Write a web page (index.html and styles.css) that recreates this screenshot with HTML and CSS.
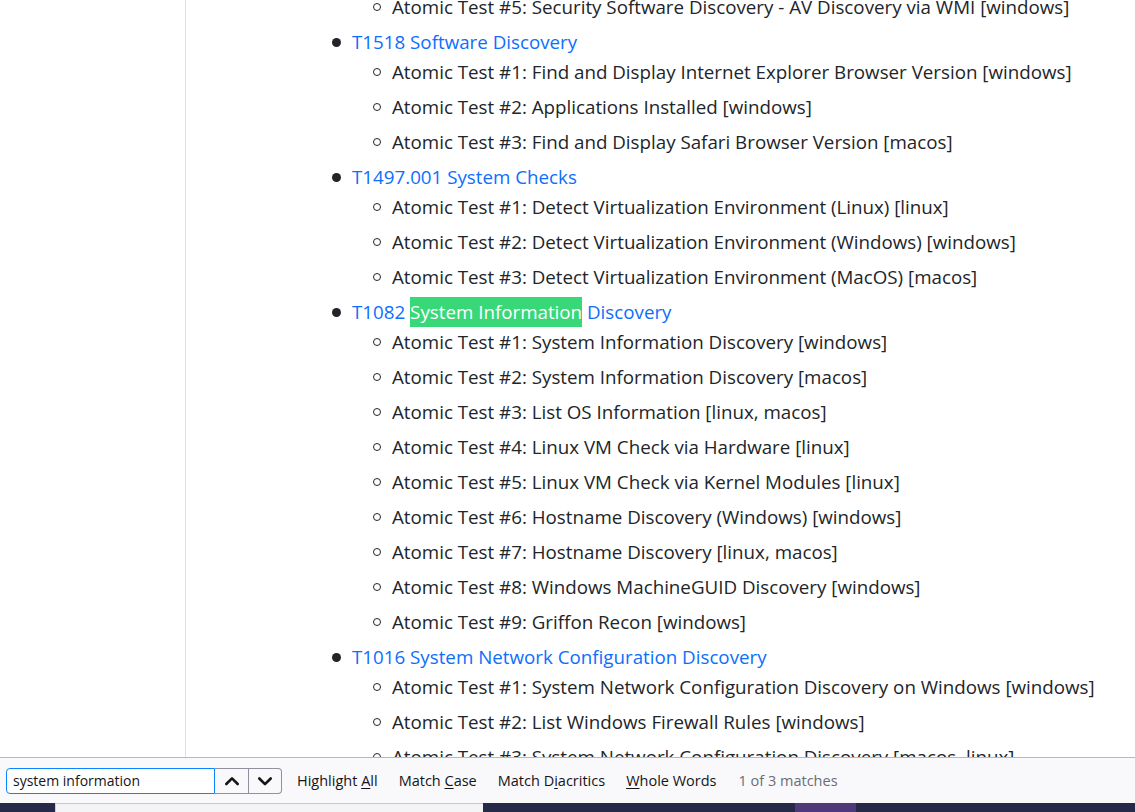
FILE: index.html
```html
<!DOCTYPE html>
<html lang="en">
<head>
<meta charset="utf-8">
<title>Atomic Red Team</title>
<link rel="stylesheet" href="styles.css">
</head>
<body>
<div class="page">
  <aside class="sidebar"></aside>
  <main class="content">
    <ul class="tech-list">
      <li class="cont">
        <ul class="test-list">
          <li>Atomic Test #5: Security Software Discovery - AV Discovery via WMI [windows]</li>
        </ul>
      </li>
      <li class="tech"><a href="#">T1518 Software Discovery</a>
        <ul class="test-list">
          <li>Atomic Test #1: Find and Display Internet Explorer Browser Version [windows]</li>
          <li>Atomic Test #2: Applications Installed [windows]</li>
          <li>Atomic Test #3: Find and Display Safari Browser Version [macos]</li>
        </ul>
      </li>
      <li class="tech"><a href="#">T1497.001 System Checks</a>
        <ul class="test-list">
          <li>Atomic Test #1: Detect Virtualization Environment (Linux) [linux]</li>
          <li>Atomic Test #2: Detect Virtualization Environment (Windows) [windows]</li>
          <li>Atomic Test #3: Detect Virtualization Environment (MacOS) [macos]</li>
        </ul>
      </li>
      <li class="tech"><a href="#">T1082 <mark class="hit">System Information</mark> Discovery</a>
        <ul class="test-list">
          <li>Atomic Test #1: System Information Discovery [windows]</li>
          <li>Atomic Test #2: System Information Discovery [macos]</li>
          <li>Atomic Test #3: List OS Information [linux, macos]</li>
          <li>Atomic Test #4: Linux VM Check via Hardware [linux]</li>
          <li>Atomic Test #5: Linux VM Check via Kernel Modules [linux]</li>
          <li>Atomic Test #6: Hostname Discovery (Windows) [windows]</li>
          <li>Atomic Test #7: Hostname Discovery [linux, macos]</li>
          <li>Atomic Test #8: Windows MachineGUID Discovery [windows]</li>
          <li>Atomic Test #9: Griffon Recon [windows]</li>
        </ul>
      </li>
      <li class="tech"><a href="#">T1016 System Network Configuration Discovery</a>
        <ul class="test-list">
          <li>Atomic Test #1: System Network Configuration Discovery on Windows [windows]</li>
          <li>Atomic Test #2: List Windows Firewall Rules [windows]</li>
          <li>Atomic Test #3: System Network Configuration Discovery [macos, linux]</li>
        </ul>
      </li>
    </ul>
  </main>
</div>
<div class="findbar">
  <div class="find-field">
    <input class="find-input" type="text" value="system information">
    <button class="find-btn" type="button" aria-label="Previous">
      <svg width="16" height="16" viewBox="0 0 16 16"><path d="M2.3 11 L8 5.3 L13.7 11" fill="none" stroke="#15141a" stroke-width="2.6" stroke-linecap="round" stroke-linejoin="round"/></svg>
    </button>
    <button class="find-btn" type="button" aria-label="Next">
      <svg width="16" height="16" viewBox="0 0 16 16"><path d="M2.3 5.5 L8 11.2 L13.7 5.5" fill="none" stroke="#15141a" stroke-width="2.6" stroke-linecap="round" stroke-linejoin="round"/></svg>
    </button>
  </div>
  <span class="find-opt">Highlight <u>A</u>ll</span>
  <span class="find-opt">Match <u>C</u>ase</span>
  <span class="find-opt">Match D<u>i</u>acritics</span>
  <span class="find-opt"><u>W</u>hole Words</span>
  <span class="find-status">1 of 3 matches</span>
</div>
<div class="taskbar">
  <div class="tb-dark tb-a"></div>
  <div class="tb-light"></div>
  <div class="tb-dark tb-b"></div>
  <div class="tb-purple"></div>
  <div class="tb-dark tb-c"></div>
</div>
</body>
</html>
```
FILE: styles.css
```css
html, body {
  margin: 0;
  padding: 0;
}
body {
  width: 1135px;
  height: 812px;
  display: flex;
  flex-direction: column;
  overflow: hidden;
  background: #fff;
  font-family: "Open Sans", "Noto Sans", sans-serif;
  color: #212529;
}
.page {
  flex: 1;
  display: flex;
  overflow: hidden;
  min-height: 0;
}
.sidebar {
  width: 185px;
  flex: none;
  border-right: 1px solid #dee2e6;
}
.content {
  flex: 1;
  padding-left: 126px;
  overflow: hidden;
}
.tech-list {
  margin: -8px 0 0 0;
  padding-left: 40px;
  list-style: none;
  font-size: 18.75px;
  line-height: 30px;
}
.tech-list li {
  position: relative;
  margin-bottom: 5px;
  white-space: nowrap;
}
.tech-list li.tech::before {
  content: "";
  position: absolute;
  left: -20px;
  top: 11px;
  width: 9px;
  height: 9px;
  border-radius: 50%;
  background: #212529;
}
.test-list {
  margin: 0;
  padding-left: 40px;
  list-style: none;
}
.test-list li::before {
  content: "";
  position: absolute;
  left: -19px;
  top: 11px;
  width: 6px;
  height: 6px;
  border: 1.5px solid #212529;
  border-radius: 50%;
}
.tech-list a {
  color: #0d6efd;
  text-decoration: none;
}
.hit {
  background: #38d878;
  color: #fff;
  padding: 2px 0 3px;
}
.findbar {
  height: 45px;
  flex: none;
  border-top: 1px solid #b8b8bc;
  background: #f9f9fb;
  display: flex;
  align-items: center;
  padding-left: 6px;
  font-family: "Open Sans", "Noto Sans", sans-serif;
  font-size: 14.5px;
  color: #15141a;
}
.find-field {
  display: flex;
  height: 26px;
  margin-right: 15px;
}
.find-input {
  box-sizing: border-box;
  width: 209px;
  height: 26px;
  margin: 0;
  border: 1px solid #0a84ff;
  border-radius: 4px 0 0 4px;
  padding: 0 6px;
  font-family: inherit;
  font-size: 14px;
  color: #15141a;
  outline: none;
  background: #fff;
}
.find-btn {
  box-sizing: border-box;
  width: 34px;
  height: 26px;
  margin: 0;
  padding: 0;
  border: 1px solid #8f8f9d;
  border-left: none;
  background: #f9f9fb;
  display: flex;
  align-items: center;
  justify-content: center;
}
.find-btn:last-child {
  width: 33px;
  border-radius: 0 4px 4px 0;
}
.find-opt {
  margin-right: 21px;
}
.find-opt u {
  text-underline-offset: 2px;
}
.find-status {
  color: #6c6c76;
  margin-left: 1px;
}
.taskbar {
  height: 9px;
  flex: none;
  display: flex;
}
.tb-dark {
  background: #262a48;
}
.tb-a { width: 55px; }
.tb-light {
  width: 428px;
  background: #f4f4f6;
  border-top: 1px solid #c8c8cc;
  border-left: 1px solid #d0d0d4;
  box-sizing: border-box;
}
.tb-b { width: 312px; }
.tb-purple {
  width: 61px;
  background: #4e3a78;
}
.tb-c { flex: 1; }
```
